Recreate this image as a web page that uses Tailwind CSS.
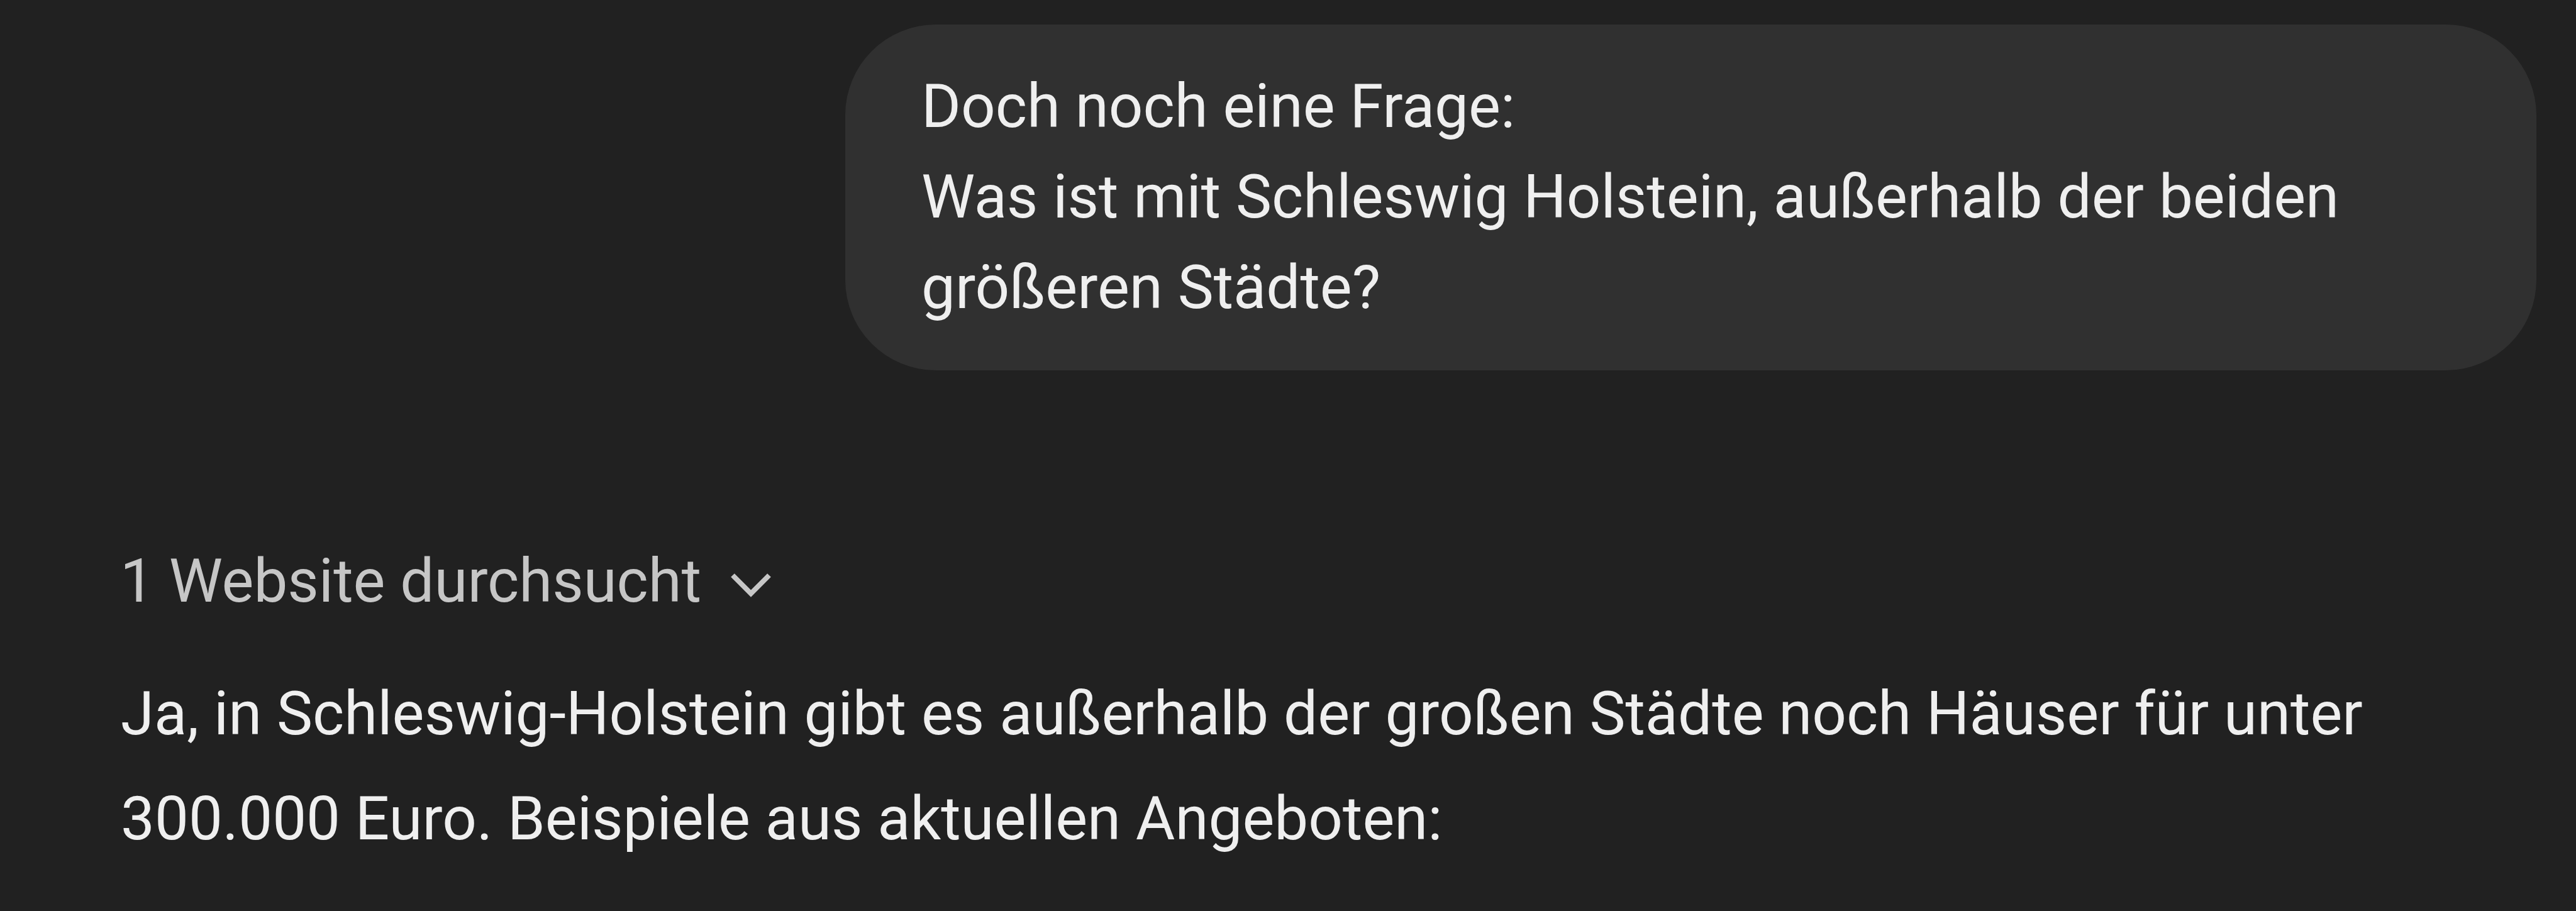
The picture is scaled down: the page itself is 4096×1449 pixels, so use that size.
<!DOCTYPE html>
<html lang="de">
<head>
  <meta charset="UTF-8" />
  <meta name="viewport" content="width=device-width, initial-scale=1.0"/>
  <title>Chat</title>
  <script src="https://cdn.jsdelivr.net/npm/@tailwindcss/browser@4"></script>
</head>
<body class="bg-[#212121] font-[Roboto,sans-serif] text-[#efefef] text-8xl w-[4096px] h-[1449px] overflow-hidden">
  <main class="flex flex-col pt-[39px]">
    <div class="self-end mr-[63px] w-[2689px] h-[550px] rounded-[144px] bg-[#303030] pl-[121px] pt-[58px] leading-[144px] whitespace-nowrap">
      <p>Doch noch eine Frage:</p>
      <p>Was ist mit Schleswig Holstein, außerhalb der beiden</p>
      <p>größeren Städte?</p>
    </div>

    <button class="flex items-center self-start mt-[263px] ml-[191px] h-[144px] text-[#c6c6c6]">
      <span>1 Website durchsucht</span>
      <svg class="w-[64px] h-[40px] ml-[47px] mt-[14px]" viewBox="0 0 64 40" fill="none" stroke="currentColor" stroke-width="8">
        <path d="M3 4l29 29L61 4"/>
      </svg>
    </button>

    <div class="ml-[192px] mt-[56px] leading-[167px] whitespace-nowrap">
      <p>Ja, in Schleswig-Holstein gibt es außerhalb der großen Städte noch Häuser für unter</p>
      <p>300.000 Euro. Beispiele aus aktuellen Angeboten:</p>
    </div>
  </main>
</body>
</html>
